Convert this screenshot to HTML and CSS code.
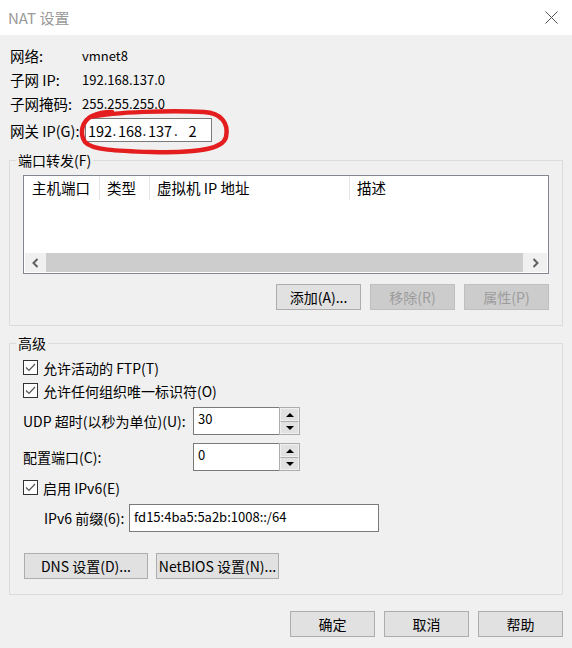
FILE: index.html
```html
<!DOCTYPE html>
<html lang="zh-CN">
<head>
    <meta charset="UTF-8">
    <title>NAT 设置</title>
    <link rel="stylesheet" href="styles.css">
</head>
<body>
<div class="dialog">

    <div class="titlebar">
        <span class="title">NAT 设置</span>
        <svg class="close" width="13" height="13" viewBox="0 0 13 13">
            <path d="M0.5 0.5 L12.5 12.5 M12.5 0.5 L0.5 12.5" stroke="#555" stroke-width="1" fill="none"/>
        </svg>
    </div>

    <div class="content">
        <div class="info">
            <span>网络:</span><span class="val">vmnet8</span>
            <span>子网 IP:</span><span class="val">192.168.137.0</span>
            <span>子网掩码:</span><span class="val">255.255.255.0</span>
            <span>网关 IP(G):</span>
            <div class="ipbox">
                <span class="octet">192</span><span class="dot">.</span>
                <span class="octet">168</span><span class="dot">.</span>
                <span class="octet">137</span><span class="dot last">.</span>
                <span class="octet">2</span>
            </div>
        </div>

        <fieldset class="group">
            <legend>端口转发(F)</legend>
            <div class="ports">
                <div class="listview">
                    <div class="list-head">
                        <span class="col c1">主机端口</span>
                        <span class="col c2">类型</span>
                        <span class="col c3">虚拟机 IP 地址</span>
                        <span class="col c4">描述</span>
                    </div>
                    <div class="list-body"></div>
                    <div class="hscroll">
                        <span class="sb-arrow left">
                            <svg width="7" height="10" viewBox="0 0 7 10"><path d="M5.5 1 L1.5 5 L5.5 9" stroke="#606060" stroke-width="2" fill="none"/></svg>
                        </span>
                        <span class="sb-thumb"></span>
                        <span class="sb-arrow right">
                            <svg width="7" height="10" viewBox="0 0 7 10"><path d="M1.5 1 L5.5 5 L1.5 9" stroke="#606060" stroke-width="2" fill="none"/></svg>
                        </span>
                    </div>
                </div>
                <div class="btn-row">
                    <button class="btn">添加(A)...</button>
                    <button class="btn" disabled>移除(R)</button>
                    <button class="btn" disabled>属性(P)</button>
                </div>
            </div>
        </fieldset>

        <fieldset class="group advanced">
            <legend>高级</legend>
            <div class="adv">
                <label class="check first"><span class="box"><svg width="13" height="13" viewBox="0 0 13 13"><path d="M2 6.5 L5 9.5 L11 3" stroke="#555" stroke-width="1.2" fill="none"/></svg></span>允许活动的 FTP(T)</label>
                <label class="check"><span class="box"><svg width="13" height="13" viewBox="0 0 13 13"><path d="M2 6.5 L5 9.5 L11 3" stroke="#555" stroke-width="1.2" fill="none"/></svg></span>允许任何组织唯一标识符(O)</label>

                <div class="spin-row udp">
                    <span class="spin-label">UDP 超时(以秒为单位)(U):</span>
                    <span class="spin-input">30</span>
                    <span class="spin-btns">
                        <span class="spin-btn"><i class="tri up"></i></span>
                        <span class="spin-btn"><i class="tri down"></i></span>
                    </span>
                </div>
                <div class="spin-row cfg">
                    <span class="spin-label">配置端口(C):</span>
                    <span class="spin-input">0</span>
                    <span class="spin-btns">
                        <span class="spin-btn"><i class="tri up"></i></span>
                        <span class="spin-btn"><i class="tri down"></i></span>
                    </span>
                </div>

                <label class="check ipv6"><span class="box"><svg width="13" height="13" viewBox="0 0 13 13"><path d="M2 6.5 L5 9.5 L11 3" stroke="#555" stroke-width="1.2" fill="none"/></svg></span>启用 IPv6(E)</label>

                <div class="prefix-row">
                    <span class="prefix-label">IPv6 前缀(6):</span>
                    <span class="prefix-input">fd15:4ba5:5a2b:1008::/64</span>
                </div>

                <div class="adv-buttons">
                    <button class="btn dns">DNS 设置(D)...</button>
                    <button class="btn netbios">NetBIOS 设置(N)...</button>
                </div>
            </div>
        </fieldset>

        <div class="footer">
            <button class="btn">确定</button>
            <button class="btn">取消</button>
            <button class="btn">帮助</button>
        </div>
    </div>

    <!-- red pen mark round the gateway box -->
    <svg class="mark" width="572" height="648" viewBox="0 0 572 648">
        <path d="M90 117 C115 112, 170 110, 204 112 C221 113, 229 123, 226 137 C223 150, 192 153, 152 152 C116 151, 92 150, 85 142 C79 133, 82 121, 92 116 C98 113, 104 112, 112 112"
              stroke="#e41e1e" stroke-width="4.5" fill="none" stroke-linecap="round"/>
    </svg>
</div>
</body>
</html>
```

FILE: styles.css
```css
* {
    box-sizing: border-box;
}
body {
    margin: 0;
    background-color: #f0f0f0;
    font-family: "Noto Sans CJK SC", "Noto Sans", sans-serif;
    font-size: 14px;
    color: #000;
}
.dialog {
    position: relative;
    width: 572px;
    height: 648px;
    overflow: hidden;
}
.titlebar {
    height: 35px;
    background-color: #fff;
    display: flex;
    align-items: center;
    justify-content: space-between;
    padding: 0 14px 0 8px;
}
.title {
    font-size: 15px;
    color: #9a9a9a;
}
.content {
    padding: 8px 9px 0;
}
.info {
    display: grid;
    grid-template-columns: 72px 1fr;
    grid-template-rows: 24px 24px 24px 30px;
    align-items: center;
    padding-left: 1px;
}
.info span:nth-child(odd) {
    font-size: 14.5px;
}
.val {
    font-size: 13px;
}
.ipbox {
    display: flex;
    align-items: center;
    width: 127px;
    height: 24px;
    margin-left: 3px;
    background-color: #fff;
    border: 1px solid #7a7a7a;
    padding-left: 2px;
    font-size: 13.5px;
}
.octet {
    width: 23px;
    text-align: center;
}
.dot {
    width: 7px;
    text-align: center;
}
.dot.last {
    width: 10px;
}
.group {
    margin: 5px 0 0;
    padding: 0;
    border: 1px solid #dcdcdc;
    min-width: 0;
}
.group legend {
    margin-left: 6px;
    padding: 0 2px;
    height: 21px;
    line-height: 21px;
}
.ports {
    padding: 4px 13px 15px;
}
.listview {
    height: 99px;
    background-color: #fff;
    border: 1px solid #828790;
    display: flex;
    flex-direction: column;
}
.list-head {
    display: flex;
    height: 24px;
    font-size: 14.5px;
}
.col {
    padding-left: 7px;
    line-height: 24px;
    border-right: 1px solid #e5e5e5;
}
.c1 {
    width: 76px;
    padding-left: 8px;
}
.c2 {
    width: 50px;
}
.c3 {
    width: 200px;
}
.c4 {
    border-right: none;
}
.list-body {
    flex: 1;
}
.hscroll {
    display: flex;
    height: 19px;
    margin: 0 1px 1px;
    background-color: #f0f0f0;
}
.sb-arrow {
    display: flex;
    align-items: center;
    justify-content: center;
    width: 21px;
}
.sb-arrow.right {
    width: 24px;
}
.sb-thumb {
    flex: 1;
    background-color: #cdcdcd;
}
.btn-row {
    display: flex;
    justify-content: flex-end;
    gap: 9px;
    margin-top: 10px;
}
.btn {
    width: 85px;
    height: 26px;
    padding: 0;
    background-color: #e1e1e1;
    border: 1px solid #adadad;
    font-family: inherit;
    font-size: 14px;
    color: #000;
}
.btn:disabled {
    background-color: #cccccc;
    border-color: #bfbfbf;
    color: #9c9c9c;
}
.group.advanced {
    margin-top: 7px;
}
.adv {
    display: flex;
    flex-direction: column;
    padding: 2px 13px 15px;
}
.check {
    display: flex;
    align-items: center;
    height: 23px;
}
.check .box {
    width: 15px;
    height: 15px;
    margin-right: 5px;
    background-color: #fff;
    border: 1px solid #333;
    display: flex;
    align-items: center;
    justify-content: center;
}
.check.ipv6 {
    margin-top: 5px;
}
.spin-row {
    display: flex;
    align-items: center;
    height: 28px;
    margin-top: 5px;
}
.spin-row.cfg {
    margin-top: 8px;
}
.spin-label {
    width: 170px;
}
.spin-input {
    width: 86px;
    height: 28px;
    background-color: #fff;
    border: 1px solid #7a7a7a;
    border-right: none;
    padding: 2px 0 0 4px;
    line-height: 18px;
    font-size: 13px;
}
.spin-btns {
    display: flex;
    flex-direction: column;
    width: 21px;
    height: 28px;
    border: 1px solid #adadad;
    background-color: #f0f0f0;
}
.spin-btn {
    flex: 1;
    display: flex;
    align-items: center;
    justify-content: center;
    background-color: #e1e1e1;
    border: 1px solid #f0f0f0;
}
.spin-btn + .spin-btn {
    border-top: 1px solid #adadad;
}
.tri {
    width: 0;
    height: 0;
    border-left: 4px solid transparent;
    border-right: 4px solid transparent;
}
.tri.up {
    border-bottom: 4px solid #000;
}
.tri.down {
    border-top: 4px solid #000;
}
.prefix-row {
    display: flex;
    align-items: center;
    height: 28px;
    margin-top: 5px;
    padding-left: 21px;
}
.prefix-label {
    width: 85px;
}
.prefix-input {
    width: 250px;
    height: 28px;
    background-color: #fff;
    border: 1px solid #7a7a7a;
    padding-left: 4px;
    line-height: 24px;
    font-size: 13px;
}
.adv-buttons {
    display: flex;
    gap: 8px;
    margin-top: 21px;
    padding-left: 1px;
}
.btn.dns {
    width: 124px;
}
.btn.netbios {
    width: 123px;
}
.footer {
    display: flex;
    justify-content: flex-end;
    gap: 9px;
    margin-top: 16px;
}
.mark {
    position: absolute;
    left: 0;
    top: 0;
    pointer-events: none;
}
```
